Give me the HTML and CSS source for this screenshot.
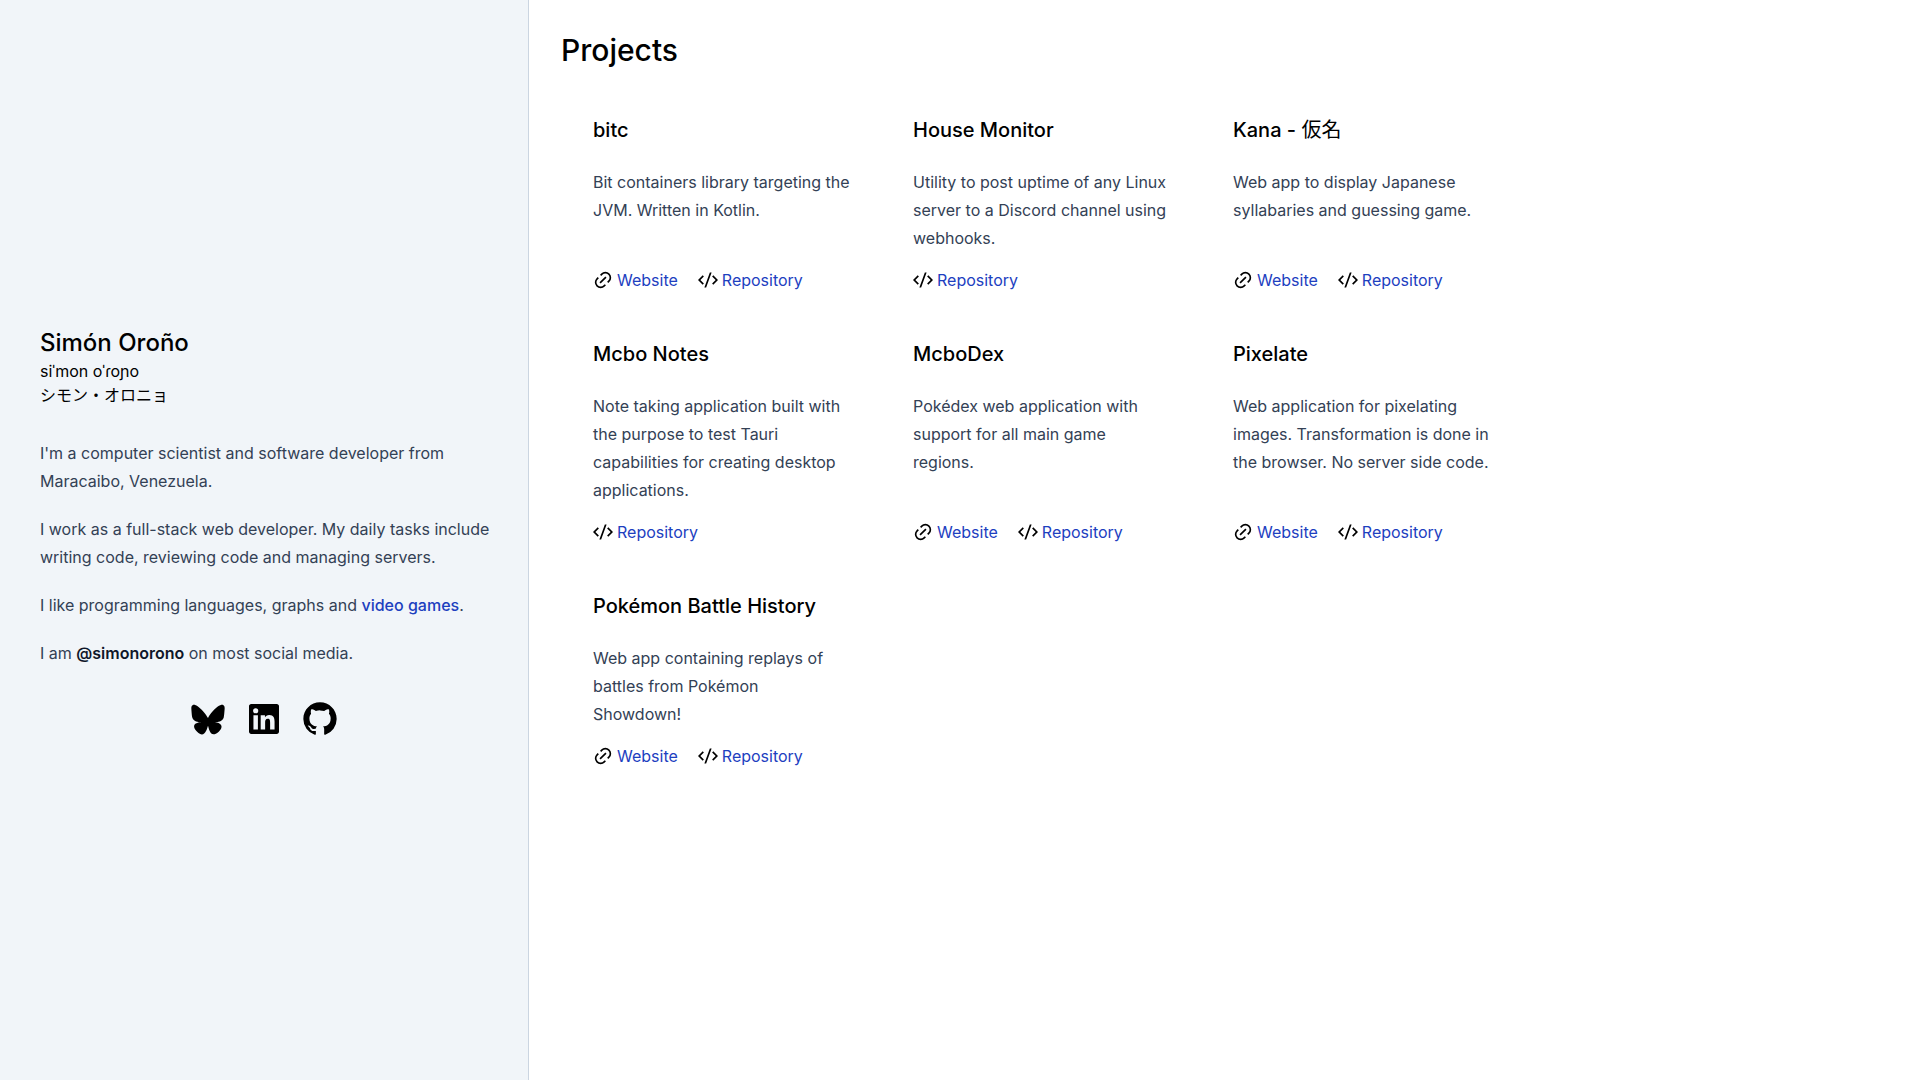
FILE: index.html
```html
<!DOCTYPE html>
<html lang="en">
<head>
  <meta charset="UTF-8">
  <title>Simón Oroño</title>
  <meta name="viewport" content="width=device-width, initial-scale=1.0">
  <link rel="stylesheet" href="styles.css">
</head>
<body>

<!-- Shared icons -->
<svg class="sprite" aria-hidden="true">
  <symbol id="icon-link" viewBox="0 0 24 24">
    <path d="M18.364 15.536L16.95 14.12l1.414-1.414a5 5 0 1 0-7.071-7.071L9.879 7.05 8.464 5.636 9.88 4.222a7 7 0 0 1 9.9 9.9l-1.415 1.414zm-2.828 2.828l-1.415 1.414a7 7 0 0 1-9.9-9.9l1.415-1.414L7.05 9.88l-1.414 1.414a5 5 0 1 0 7.071 7.071l1.414-1.414 1.415 1.414zm-.708-10.607l1.415 1.415-7.071 7.07-1.415-1.414 7.071-7.07z"/>
  </symbol>
  <symbol id="icon-code" viewBox="0 0 24 24">
    <path d="M24 12l-5.657 5.657-1.414-1.414L21.172 12l-4.243-4.243 1.414-1.414L24 12zM2.828 12l4.243 4.243-1.414 1.414L0 12l5.657-5.657L7.07 7.757 2.828 12zm6.96 9H7.66l6.552-18h2.128L9.788 21z"/>
  </symbol>
</svg>

<div class="layout">
  <aside class="sidebar">
    <header>
      <h1 class="name">Simón Oroño</h1>
      <p class="reading">siˈmon oˈɾoɲo</p>
      <p class="reading" lang="ja">シモン・オロニョ</p>
    </header>

    <div class="bio">
      <p>I'm a computer scientist and software developer from Maracaibo, Venezuela.</p>
      <p>I work as a full-stack web developer. My daily tasks include writing code, reviewing code and managing servers.</p>
      <p>I like programming languages, graphs and <a href="#">video games</a>.</p>
      <p>I am <strong>@simonorono</strong> on most social media.</p>
    </div>

    <nav class="social">
      <a href="#" aria-label="Bluesky">
        <svg viewBox="0 0 24 24"><path d="M12 11.388c-.906-1.761-3.372-5.044-5.665-6.662-2.197-1.55-3.034-1.283-3.583-1.033C2.116 3.978 2 4.955 2 5.528c0 .575.315 4.709.52 5.4.68 2.28 3.094 3.05 5.32 2.803-3.26.483-6.157 1.67-2.36 5.898 4.178 4.325 5.726-.927 6.52-3.59.794 2.663 1.708 7.726 6.444 3.59 3.556-3.59.977-5.415-2.283-5.898 2.225.247 4.64-.523 5.319-2.803.205-.69.52-4.825.52-5.399 0-.575-.116-1.55-.752-1.838-.549-.248-1.386-.517-3.583 1.033-2.293 1.621-4.76 4.904-5.665 6.664z"/></svg>
      </a>
      <a href="#" aria-label="LinkedIn">
        <svg viewBox="0 0 24 24"><path d="M18.335 18.339H15.67v-4.177c0-.996-.02-2.278-1.39-2.278-1.389 0-1.601 1.084-1.601 2.205v4.25h-2.666V9.75h2.56v1.17h.035c.358-.674 1.228-1.387 2.528-1.387 2.7 0 3.2 1.778 3.2 4.091v4.715zM7.003 8.575a1.546 1.546 0 0 1-1.548-1.549 1.548 1.548 0 1 1 1.547 1.549zm1.336 9.764H5.666V9.75H8.34v8.589zM19.67 3H4.329C3.593 3 3 3.58 3 4.297v15.406C3 20.42 3.594 21 4.328 21h15.338C20.4 21 21 20.42 21 19.703V4.297C21 3.58 20.4 3 19.666 3h.003z"/></svg>
      </a>
      <a href="#" aria-label="GitHub">
        <svg viewBox="0 0 24 24"><path d="M12 2C6.475 2 2 6.475 2 12a9.994 9.994 0 0 0 6.838 9.488c.5.087.687-.213.687-.476 0-.237-.013-1.024-.013-1.862-2.512.463-3.162-.612-3.362-1.175-.113-.288-.6-1.175-1.025-1.413-.35-.187-.85-.65-.013-.662.788-.013 1.35.725 1.538 1.025.9 1.512 2.338 1.087 2.912.825.088-.65.35-1.087.638-1.337-2.225-.25-4.55-1.113-4.55-4.938 0-1.088.387-1.987 1.025-2.688-.1-.25-.45-1.275.1-2.65 0 0 .837-.262 2.75 1.026a9.28 9.28 0 0 1 2.5-.338c.85 0 1.7.112 2.5.337 1.912-1.3 2.75-1.024 2.75-1.024.55 1.375.2 2.4.1 2.65.637.7 1.025 1.587 1.025 2.687 0 3.838-2.337 4.688-4.562 4.938.362.312.675.912.675 1.85 0 1.337-.013 2.412-.013 2.75 0 .262.188.574.688.474A10.016 10.016 0 0 0 22 12c0-5.525-4.475-10-10-10z"/></svg>
      </a>
    </nav>
  </aside>

  <main class="content">
    <h2 class="heading">Projects</h2>

    <div class="projects">
      <article class="project">
        <h3>bitc</h3>
        <p>Bit containers library targeting the JVM. Written in Kotlin.</p>
        <div class="links">
          <span><svg><use href="#icon-link"/></svg><a href="#">Website</a></span>
          <span><svg><use href="#icon-code"/></svg><a href="#">Repository</a></span>
        </div>
      </article>

      <article class="project">
        <h3>House Monitor</h3>
        <p>Utility to post uptime of any Linux server to a Discord channel using webhooks.</p>
        <div class="links">
          <span><svg><use href="#icon-code"/></svg><a href="#">Repository</a></span>
        </div>
      </article>

      <article class="project">
        <h3>Kana - <span class="kanji" lang="ja">仮名</span></h3>
        <p>Web app to display Japanese syllabaries and guessing game.</p>
        <div class="links">
          <span><svg><use href="#icon-link"/></svg><a href="#">Website</a></span>
          <span><svg><use href="#icon-code"/></svg><a href="#">Repository</a></span>
        </div>
      </article>

      <article class="project">
        <h3>Mcbo Notes</h3>
        <p>Note taking application built with the purpose to test Tauri capabilities for creating desktop applications.</p>
        <div class="links">
          <span><svg><use href="#icon-code"/></svg><a href="#">Repository</a></span>
        </div>
      </article>

      <article class="project">
        <h3>McboDex</h3>
        <p>Pokédex web application with support for all main game regions.</p>
        <div class="links">
          <span><svg><use href="#icon-link"/></svg><a href="#">Website</a></span>
          <span><svg><use href="#icon-code"/></svg><a href="#">Repository</a></span>
        </div>
      </article>

      <article class="project">
        <h3>Pixelate</h3>
        <p>Web application for pixelating images. Transformation is done in the browser. No server side code.</p>
        <div class="links">
          <span><svg><use href="#icon-link"/></svg><a href="#">Website</a></span>
          <span><svg><use href="#icon-code"/></svg><a href="#">Repository</a></span>
        </div>
      </article>

      <article class="project">
        <h3>Pokémon Battle History</h3>
        <p>Web app containing replays of battles from Pokémon Showdown!</p>
        <div class="links">
          <span><svg><use href="#icon-link"/></svg><a href="#">Website</a></span>
          <span><svg><use href="#icon-code"/></svg><a href="#">Repository</a></span>
        </div>
      </article>
    </div>
  </main>
</div>

</body>
</html>
```
FILE: styles.css
```css
* {
  box-sizing: border-box;
}
body {
  margin: 0;
  font-family: Inter, "Noto Sans CJK JP", sans-serif;
  font-size: 16px;
  line-height: 24px;
  color: #000;
  background: #fff;
}
h1, h2, h3, p {
  margin: 0;
  font-weight: 500;
}
p {
  font-weight: 400;
}
a {
  color: #1d40bf;
  text-decoration: none;
}
a:hover {
  text-decoration: underline;
}
svg {
  display: block;
  fill: #000;
}
.sprite {
  display: none;
}

.layout {
  display: flex;
  flex-direction: column;
  min-height: 100vh;
}

/* Sidebar */
.sidebar {
  display: flex;
  flex-direction: column;
  justify-content: center;
  gap: 32px;
  padding: 40px;
  background: #f1f5f9;
}
.name {
  font-size: 24px;
  line-height: 32px;
}
.bio {
  display: flex;
  flex-direction: column;
  gap: 20px;
  margin-right: -16px;
  line-height: 28px;
  color: #334155;
}
.bio a {
  font-weight: 500;
}
.bio strong {
  font-weight: 600;
  color: #0f172a;
}
.social {
  display: flex;
  justify-content: center;
  gap: 16px;
  margin-bottom: 14px;
}
.social svg {
  width: 40px;
  height: 40px;
}

/* Projects */
.content {
  flex: 1;
  padding: 32px;
}
.heading {
  margin-bottom: 24px;
  font-size: 30px;
  line-height: 36px;
}
.projects {
  display: grid;
  grid-template-columns: repeat(auto-fill, 320px);
  max-width: 1024px;
}
.project {
  display: flex;
  flex-direction: column;
  padding: 24px 31px 24px 32px;
}
.project h3 {
  margin-bottom: 24px;
  font-size: 20px;
  line-height: 28px;
}
.kanji {
  font-weight: 400;
}
.project p {
  flex: 1;
  margin-bottom: 16px;
  line-height: 28px;
  color: #334155;
}
.links {
  display: flex;
  gap: 20px;
}
.links span {
  display: flex;
  align-items: center;
  gap: 4px;
}
.links svg {
  width: 20px;
  height: 20px;
}

@media (min-width: 1024px) {
  .layout {
    flex-direction: row;
  }
  .sidebar {
    flex: none;
    width: 529px;
    border-right: 1px solid #cbd5e1;
  }
}
```
